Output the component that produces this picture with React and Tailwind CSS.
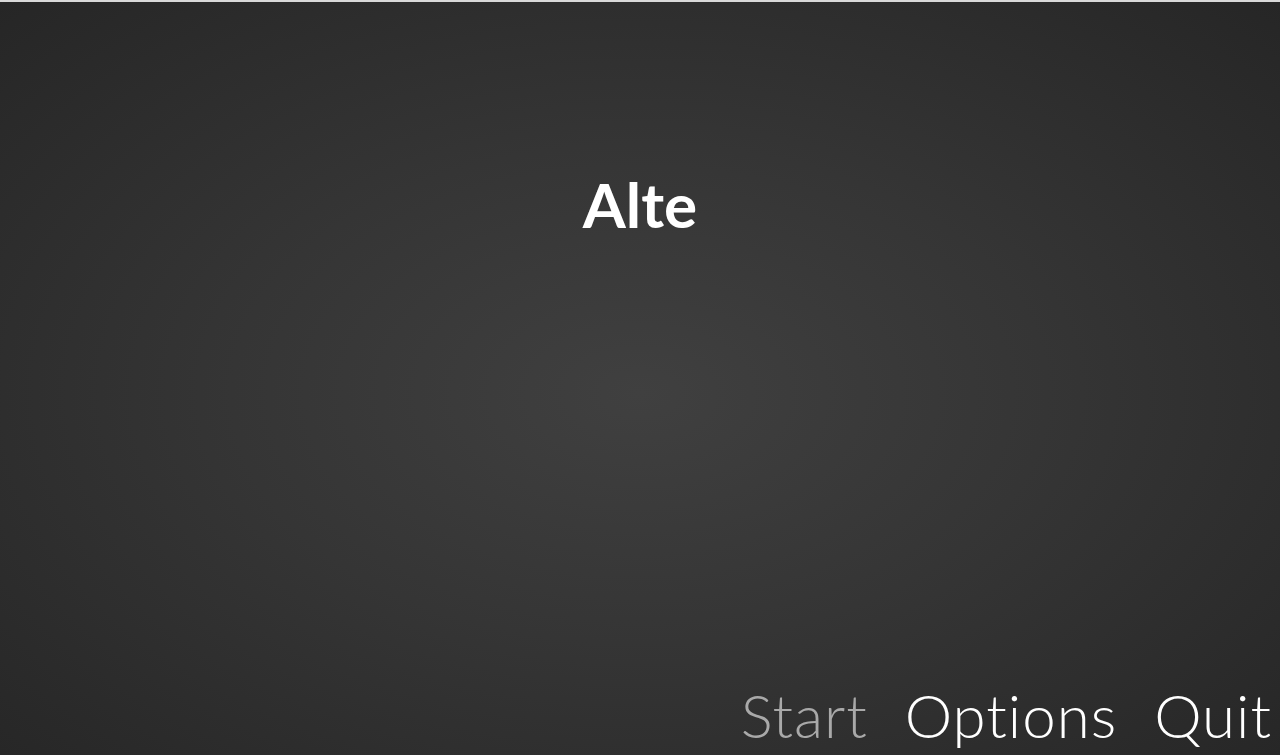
import React from "react";

const items = [
  { label: "Start", active: false },
  { label: "Options", active: true },
  { label: "Quit", active: true },
];

export default function App() {
  return (
    <div className="w-full h-[755px] flex flex-col overflow-hidden bg-[#d9d9d9]">
      <div className="mt-[2px] flex-1 flex flex-col bg-[radial-gradient(ellipse_at_50%_52%,#404040_0%,#353535_45%,#2a2a2a_85%,#262626_100%)] font-['Lato','Noto_Sans',sans-serif]">
        <div className="pt-[171px] flex justify-center">
          <h1 className="text-[62px] font-bold text-white leading-none">
            Alte
          </h1>
        </div>
        <div className="flex-1" />
        <nav className="flex justify-end gap-[37px] pr-[8px] pb-[10px]">
          {items.map((it) => (
            <span
              key={it.label}
              className={
                "text-[60px] font-light leading-none tracking-[1px] " +
                (it.active ? "text-white" : "text-[#a9a9a9]")
              }
            >
              {it.label}
            </span>
          ))}
        </nav>
      </div>
    </div>
  );
}
